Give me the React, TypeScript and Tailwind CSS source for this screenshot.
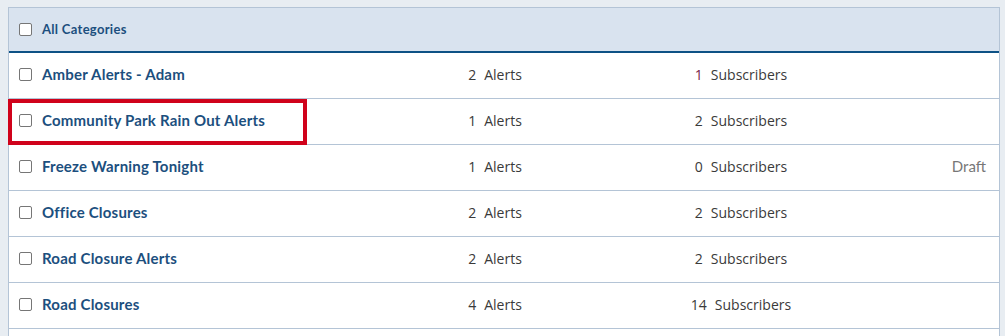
import React from "react";

type Row = { name: string; alerts: number; subs: number; subsAccent?: boolean; status?: string; highlight?: boolean };

const rows: Row[] = [
  { name: "Amber Alerts - Adam", alerts: 2, subs: 1, subsAccent: true },
  { name: "Community Park Rain Out Alerts", alerts: 1, subs: 2, highlight: true },
  { name: "Freeze Warning Tonight", alerts: 1, subs: 0, status: "Draft" },
  { name: "Office Closures", alerts: 2, subs: 2 },
  { name: "Road Closure Alerts", alerts: 2, subs: 2 },
  { name: "Road Closures", alerts: 4, subs: 14 },
];

function Box() {
  return <span className="block w-[13px] h-[13px] shrink-0 rounded-[2px] border border-[#767676] bg-white" />;
}

export default function App() {
  return (
    <div className="h-[336px] overflow-hidden bg-[#e8edf2] pt-[7px] pl-[8px] pr-[5px]">
      <div className="h-[400px] border border-[#b4c4d6] border-b-0 bg-white">
        <div className="h-[45px] flex items-center gap-[10px] pl-[10px] bg-[#d9e3ef] border-b-2 border-[#0d5185]">
          <Box />
          <span className="font-['Lato',sans-serif] font-bold text-[13px] tracking-[0.3px] text-[#1c4f7e]">All Categories</span>
        </div>
        {rows.map((r) => (
          <div key={r.name} className="grid grid-cols-[298px_376px_116px_1fr] h-[46px] border-b border-[#b4c4d6]">
            <div className="relative h-full flex items-center gap-[10px] pl-[10px] pb-[2px]">
              {r.highlight && (
                <span className="absolute left-[-1px] right-0 top-0 bottom-[-1px] border-4 border-[#d0021b] pointer-events-none" />
              )}
              <Box />
              <span className="font-['Lato',sans-serif] font-bold text-[15px] tracking-[0.2px] text-[#1c4f7e]">{r.name}</span>
            </div>
            <div className="h-full flex items-center justify-center pb-[2px] font-['Open_Sans',sans-serif] text-[14px] text-[#3a3a3a] whitespace-nowrap">
              <span className="mr-[8px]">{r.alerts}</span>Alerts
            </div>
            <div className="h-full flex items-center justify-center pb-[2px] font-['Open_Sans',sans-serif] text-[14px] text-[#3a3a3a] whitespace-nowrap">
              <span className={"mr-[8px] " + (r.subsAccent ? "text-[#7a2348]" : "")}>{r.subs}</span>Subscribers
            </div>
            <div className="h-full flex items-center justify-end pr-[13px] pb-[2px] font-['Lato',sans-serif] text-[15px] text-[#777777]">{r.status ?? ""}</div>
          </div>
        ))}
      </div>
    </div>
  );
}
